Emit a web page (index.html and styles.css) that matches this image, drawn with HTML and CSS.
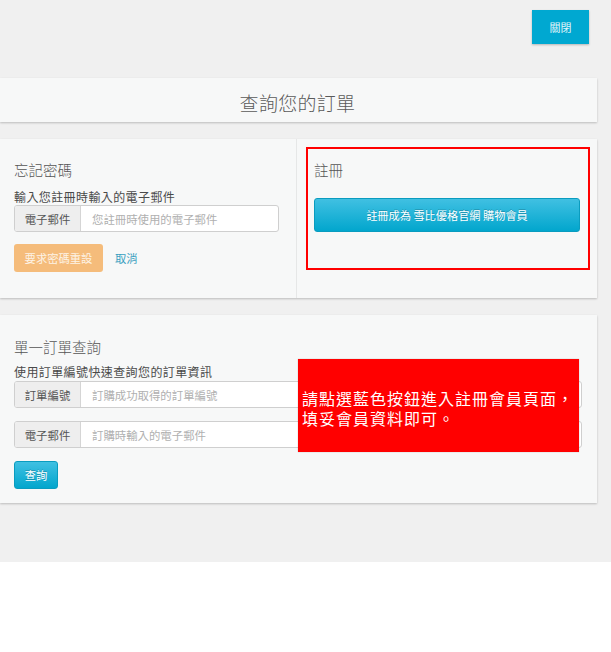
FILE: index.html
```html
<!DOCTYPE html>
<html lang="zh-Hant">
<head>
<meta charset="utf-8">
<title>查詢您的訂單</title>
<link rel="stylesheet" href="styles.css">
</head>
<body>
<div class="page">
  <div class="topbar">
    <button class="btn-close">關閉</button>
  </div>

  <div class="panel title-panel">
    <h1 class="title">查詢您的訂單</h1>
  </div>

  <div class="panel split-panel">
    <div class="col col-left">
      <h2 class="heading">忘記密碼</h2>
      <div class="label">輸入您註冊時輸入的電子郵件</div>
      <div class="input-group narrow">
        <span class="addon">電子郵件</span>
        <span class="field">您註冊時使用的電子郵件</span>
      </div>
      <div class="actions">
        <button class="btn-orange">要求密碼重設</button>
        <a class="link">取消</a>
      </div>
    </div>
    <div class="col col-right">
      <div class="mark-box">
        <h2 class="heading">註冊</h2>
        <button class="btn-register">註冊成為 雪比優格官網 購物會員</button>
      </div>
    </div>
  </div>

  <div class="panel order-panel">
    <h2 class="heading">單一訂單查詢</h2>
    <div class="label label-2">使用訂單編號快速查詢您的訂單資訊</div>
    <div class="input-group">
      <span class="addon">訂單編號</span>
      <span class="field">訂購成功取得的訂單編號</span>
    </div>
    <div class="input-group second">
      <span class="addon">電子郵件</span>
      <span class="field">訂購時輸入的電子郵件</span>
    </div>
    <button class="btn-query">查詢</button>
    <div class="note">請點選藍色按鈕進入註冊會員頁面，<br>填妥會員資料即可。</div>
  </div>
</div>
</body>
</html>
```

FILE: styles.css
```css
* { box-sizing: border-box; }
html, body {
  margin: 0;
  padding: 0;
  background: #ffffff;
}
body {
  font-family: "Noto Sans CJK TC", "Liberation Sans", sans-serif;
  color: #333;
}
.page {
  background: #f0f0f0;
  height: 562px;
  padding-top: 10px;
}
.topbar {
  display: flex;
  justify-content: flex-end;
  padding-right: 22px;
}
.btn-close {
  width: 57px;
  height: 34px;
  border: 0;
  background: #00a8d1;
  color: #e3f6fb;
  font-family: inherit;
  font-size: 11px;
  box-shadow: 0 1px 2px rgba(0,0,0,0.25);
  padding: 0;
}
.panel {
  width: 597px;
  background: #f7f8f8;
  box-shadow: 0 1px 2px rgba(0,0,0,0.22);
}
.title-panel {
  margin-top: 34px;
  height: 44px;
  padding-top: 6px;
}
.title {
  margin: 0;
  text-align: center;
  font-size: 19px;
  line-height: 38px;
  font-weight: 300;
  color: #5a5a5a;
  letter-spacing: 0.3px;
  padding-right: 2px;
}
.split-panel {
  margin-top: 17px;
  height: 159px;
  display: flex;
}
.col-left {
  width: 297px;
  border-right: 1px solid #e6e7e7;
  padding: 21px 17px 0 14px;
}
.col-right {
  flex: 1;
  padding: 8px 7px 0 9px;
}
.heading {
  margin: 0;
  font-size: 14.5px;
  line-height: 20px;
  font-weight: 300;
  color: #555;
}
.label {
  margin-top: 9px;
  font-size: 12px;
  letter-spacing: 0.4px;
  line-height: 16px;
  color: #4a4a4a;
}
.label-2 { margin-top: 7px; }
.input-group {
  display: flex;
  height: 27px;
  border: 1px solid #cfcfcf;
  border-radius: 3px;
  background: #fff;
  overflow: hidden;
  margin-top: 1px;
}
.input-group.narrow { margin-top: 0; }
.input-group.second { margin-top: 13px; }
.addon {
  width: 66px;
  flex: none;
  background: #eeeeee;
  border-right: 1px solid #d5d5d5;
  color: #555;
  font-size: 11.4px;
  display: flex;
  align-items: center;
  justify-content: center;
}
.field {
  flex: 1;
  padding-left: 11px;
  color: #b0b0b0;
  font-size: 11.4px;
  display: flex;
  align-items: center;
}
.actions {
  display: flex;
  align-items: center;
  margin-top: 12px;
  gap: 12px;
}
.btn-orange {
  width: 89px;
  height: 28px;
  border: 0;
  border-radius: 3px;
  background: #f5bc7b;
  color: #fdf3e6;
  font-family: inherit;
  font-size: 11.3px;
  padding: 0;
}
.link {
  color: #3a9fc0;
  font-size: 11.3px;
}
.mark-box {
  border: 2px solid #ff0000;
  height: 123px;
  padding: 11px 8px 0 6px;
}
.btn-register {
  display: block;
  margin-top: 18px;
  width: 100%;
  height: 34px;
  border: 1px solid #0a9cbf;
  border-radius: 3px;
  background: linear-gradient(#40c0e2, #02a6cd);
  color: #ffffff;
  font-family: inherit;
  font-size: 11.2px;
  text-shadow: 0 -1px 0 rgba(0,0,0,0.2);
  padding: 0;
}
.order-panel {
  position: relative;
  margin-top: 17px;
  height: 188px;
  padding: 22px 15px 0 14px;
}
.btn-query {
  display: block;
  margin-top: 13px;
  width: 44px;
  height: 28px;
  border: 1px solid #0a9cbf;
  border-radius: 3px;
  background: linear-gradient(#40c0e2, #02a6cd);
  color: #ffffff;
  font-family: inherit;
  font-size: 11.3px;
  text-shadow: 0 -1px 0 rgba(0,0,0,0.2);
  padding: 0;
}
.note {
  position: absolute;
  left: 298px;
  top: 44px;
  width: 281px;
  height: 93px;
  background: #ff0000;
  color: #ffffff;
  font-size: 16px;
  letter-spacing: 1px;
  line-height: 20px;
  padding: 29px 0 0 4px;
  white-space: nowrap;
  box-shadow: 0 0 1px rgba(0,0,0,0.3);
}
```
